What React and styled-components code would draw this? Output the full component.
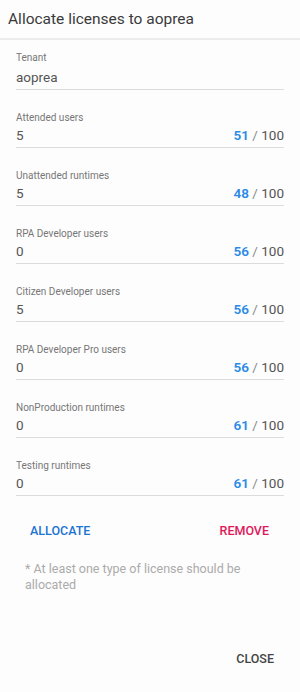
import React from "react";
import styled, { createGlobalStyle } from "styled-components";

const Global = createGlobalStyle`
  html, body { margin: 0; padding: 0; background: #fdfdfd; }
  body { font-family: Roboto, "Liberation Sans", sans-serif; }
`;

const Dialog = styled.div`
  width: 300px;
  height: 692px;
  background: #fdfdfd;
  display: flex;
  flex-direction: column;
  box-sizing: border-box;
`;

const Header = styled.div`
  height: 38px;
  padding: 0 8px;
  display: flex;
  align-items: center;
  font-size: 15.5px;
  color: #3a3a3a;
  border-bottom: 2px solid #ececec;
`;

const Body = styled.div`
  padding: 11px 16px 0;
  display: flex;
  flex-direction: column;
  gap: 21px;
`;

const Field = styled.div`
  display: flex;
  flex-direction: column;
  border-bottom: 1px solid #dcdcdc;
  padding-bottom: 2px;
`;

const Label = styled.div`
  font-size: 10px;
  line-height: 14px;
  color: #777;
`;

const ValueRow = styled.div`
  height: 20px;
  margin-top: ${(p) => (p.$tall ? 2 : 0)}px;
  display: flex;
  align-items: center;
  justify-content: space-between;
  font-size: 13.5px;
  color: #555;
`;

const Count = styled.span`
  color: #8a8a8a;
  b { color: #2a8ae6; font-weight: 600; }
  span { color: #555; }
`;

const Actions = styled.div`
  display: flex;
  justify-content: space-between;
  padding: 19px 23px 0 22px;
`;

const TextButton = styled.button`
  background: none;
  border: none;
  padding: 8px;
  font-family: Roboto, "Liberation Sans", sans-serif;
  font-size: 12.5px;
  font-weight: 500;
  color: ${(p) => p.$color};
  cursor: pointer;
`;

const Note = styled.p`
  margin: 15px 0 0 25px;
  width: 230px;
  font-size: 12.5px;
  line-height: 16px;
  color: #ababab;
`;

const Footer = styled.div`
  margin-top: auto;
  display: flex;
  justify-content: flex-end;
  padding: 0 18px 18px 0;
`;

const fields = [
  { label: "Attended users", value: "5", used: 51 },
  { label: "Unattended runtimes", value: "5", used: 48 },
  { label: "RPA Developer users", value: "0", used: 56 },
  { label: "Citizen Developer users", value: "5", used: 56 },
  { label: "RPA Developer Pro users", value: "0", used: 56 },
  { label: "NonProduction runtimes", value: "0", used: 61 },
  { label: "Testing runtimes", value: "0", used: 61 },
];

const App = () => {
  return (
    <Dialog>
      <Global />
      <Header>Allocate licenses to aoprea</Header>
      <Body>
        <Field>
          <Label>Tenant</Label>
          <ValueRow $tall>aoprea</ValueRow>
        </Field>
        {fields.map((f) => (
          <Field key={f.label}>
            <Label>{f.label}</Label>
            <ValueRow>
              {f.value}
              <Count>
                <b>{f.used}</b> / <span>100</span>
              </Count>
            </ValueRow>
          </Field>
        ))}
      </Body>
      <Actions>
        <TextButton $color="#1b73d3">ALLOCATE</TextButton>
        <TextButton $color="#e0195a">REMOVE</TextButton>
      </Actions>
      <Note>* At least one type of license should be allocated</Note>
      <Footer>
        <TextButton $color="#444">CLOSE</TextButton>
      </Footer>
    </Dialog>
  );
};

export default App;
